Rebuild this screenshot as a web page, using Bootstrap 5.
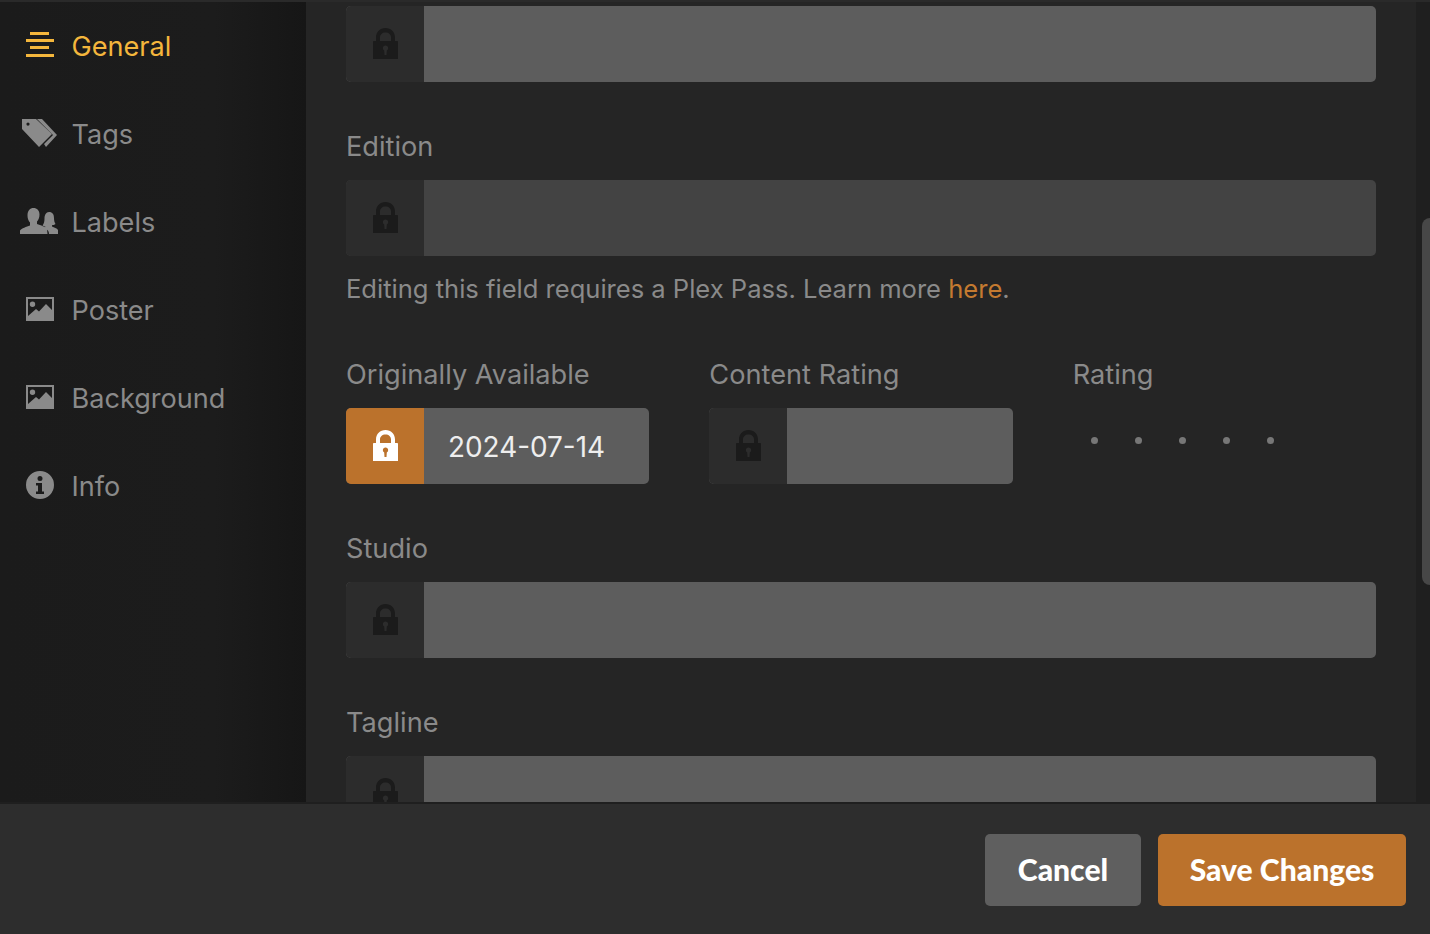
<!DOCTYPE html>
<html lang="en">
<head>
  <meta charset="UTF-8">
  <title>Edit Metadata</title>
  <meta name="viewport" content="width=device-width, initial-scale=1">
  <link href="https://cdn.jsdelivr.net/npm/bootstrap@5.3.3/dist/css/bootstrap.min.css" rel="stylesheet">
  <style>
    html, body { height: 100%; background: #2d2d2d; overflow: hidden; }
    body { font-family: Inter, "Noto Sans", sans-serif; }
    .app-shell { height: 934px; }
    .top-strip { height: 2px; background: #2a2a2a; flex: none; }
    .side-menu { width: 306px; flex: none; background: linear-gradient(90deg, #1b1b1b 0%, #1c1c1c 70%, #161616 100%); }
    .side-item { height: 88px; padding: 2px 0 0 20px; color: #8a8a8a; font-size: 27.1px; text-decoration: none; }
    .side-item.is-active { color: #f4b63c; }
    .side-icon { width: 52px; flex: none; fill: currentColor; margin-bottom: 5px; margin-left: -.5px; }
    .pane { background: #252525; padding: 4px 40px 0; min-width: 0; overflow: hidden; }
    .scroll-track { width: 14px; flex: none; background: #1f1f1f; padding-left: 6px; }
    .scroll-thumb { width: 8px; height: 367px; margin-top: 216px; background: #474747; border-radius: 8px 0 0 8px; }
    .field-label { color: #8a8a8a; font-size: 27.2px; line-height: 36px; margin: 0 0 15px; }
    .field-block { margin-bottom: 47px; }
    .lock-field { height: 76px; border-radius: 5px; overflow: hidden; background: #5d5d5d; }
    .lock-cell { width: 78px; flex: none; background: #2c2c2c; fill: #1b1b1b; }
    .lock-cell svg { margin-bottom: 2px; }
    .lock-cell.is-on { background: #bb722c; fill: #fff; }
    .lock-input { color: #eee; font-size: 27.9px; padding: 3px 0 0 24px; }
    .lock-field.is-disabled { background: #434343; }
    .help-line { color: #8a8a8a; font-size: 25.55px; line-height: 34px; margin-top: 16px; margin-bottom: 51px; }
    .help-line a { color: #c47a30; text-decoration: none; }
    .field-row { --bs-gutter-x: 60px; margin-bottom: 47px; }
    .rate-dots { height: 76px; padding: 29px 0 0 18px; gap: 37px; }
    .rate-dot { width: 7px; height: 7px; border-radius: 50%; background: #777; }
    .action-bar { height: 132px; flex: none; background: #2d2d2d; border-top: 2px solid #1f1f1f; padding: 30px 24px 0 0; gap: 17px; }
    .action-btn { height: 72px; border: 0; border-radius: 5px; color: #fff; font-family: Lato, sans-serif; font-weight: 900; font-size: 30.1px; padding-bottom: 6px; }
    .btn-cancel { width: 156px; background: #5f5f5f; }
    .btn-save { width: 248px; background: #bb722c; }
  </style>
</head>
<body>
  <svg width="0" height="0" class="d-block">
    <symbol id="lock-icon" viewBox="0 0 25 31">
      <path fill-rule="evenodd" d="M3 13V9.500C3 4 7 0 12.500 0S22 4 22 9.500V13h2c.6 0 1 .4 1 1v17H0V14c0-.6.4-1 1-1zM7 13h11V9.700C18 6.500 15.800 4.500 12.500 4.500S7 6.500 7 9.700zM12.500 17.500a2.600 2.600 0 0 0-1.300 4.900L11.500 27h2l.3-4.600a2.600 2.600 0 0 0-1.300-4.900z"/>
    </symbol>
    <symbol id="picture-icon" viewBox="0 0 28 24">
      <path fill-rule="evenodd" d="M0 0h28v24H0zM2 2v17l8-7 3 2.500L20 7l6 6V2zM6.500 4.500a2.700 2.700 0 1 1 0 5.400 2.700 2.700 0 0 1 0-5.400z"/>
    </symbol>
  </svg>

  <div class="app-shell d-flex flex-column">
    <div class="top-strip"></div>
    <div class="d-flex flex-grow-1 overflow-hidden">
      <nav class="side-menu d-flex flex-column">
        <a href="#" class="side-item is-active d-flex align-items-center">
          <svg class="side-icon" height="26" viewBox="-6 0 52 26"><path d="M4 0h19v3H4zM0 7h28v3H0zM4 14h19v3H4zM0 22h28v3H0z"/></svg>General
        </a>
        <a href="#" class="side-item d-flex align-items-center">
          <svg class="side-icon" height="28" viewBox="-2 0 52 28"><path fill-rule="evenodd" d="M0 0h14l16 15-13 13L0 10zM6 3.500a1.600 1.600 0 1 0 0 3.200 1.600 1.600 0 0 0 0-3.200z"/><path d="M15 0h5l15 16-11 12-2-3 9-9z"/></svg>Tags
        </a>
        <a href="#" class="side-item d-flex align-items-center">
          <svg class="side-icon" height="26" viewBox="0 0 52 26"><path d="M13.500 0c3.500 0 6 2.500 6 6.500 0 3-1 5.500-2.500 7v2.500c3.500 1.500 9 2.500 10 5l.5 5H0v-3.500c1.500-2.500 6.500-3.500 10-5v-3c-1.500-1.500-2.500-4-2.500-7C7.500 2.500 10 0 13.500 0z"/><path d="M29 4c3.500 0 5 2.500 5 6 0 2.500.5 4.500 1.500 6-1 .8-2.500 1.200-3.500 1.200v1.300c2 1 5 1.500 6 3.500v4h-9c0-3-1.500-4.500-4.500-6l1-1.300c-1 0-2-.5-3-1.200 1.500-2 2-4 2-7 0-3.500 1.500-6.500 4.500-6.500z"/></svg>Labels
        </a>
        <a href="#" class="side-item d-flex align-items-center">
          <svg class="side-icon" height="24" viewBox="-6 0 52 24"><use href="#picture-icon" width="28" height="24"/></svg>Poster
        </a>
        <a href="#" class="side-item d-flex align-items-center">
          <svg class="side-icon" height="24" viewBox="-6 0 52 24"><use href="#picture-icon" width="28" height="24"/></svg>Background
        </a>
        <a href="#" class="side-item d-flex align-items-center">
          <svg class="side-icon" height="28" viewBox="-6 0 52 28"><path fill-rule="evenodd" d="M14 0a14 14 0 1 1 0 28A14 14 0 0 1 14 0zM14 5a2.500 2.500 0 1 0 0 5 2.500 2.500 0 0 0 0-5zM10 12v2.500h2v6h-2V23h8v-2.500h-2V12z"/></svg>Info
        </a>
      </nav>

      <main class="pane flex-grow-1">
        <div class="field-block">
          <div class="lock-field d-flex">
            <div class="lock-cell d-flex align-items-center justify-content-center"><svg width="25" height="31"><use href="#lock-icon"/></svg></div>
          </div>
        </div>

        <p class="field-label">Edition</p>
        <div class="lock-field is-disabled d-flex">
          <div class="lock-cell d-flex align-items-center justify-content-center"><svg width="25" height="31"><use href="#lock-icon"/></svg></div>
        </div>
        <p class="help-line">Editing this field requires a Plex Pass. Learn more <a href="#">here</a>.</p>

        <div class="row field-row">
          <div class="col-4">
            <p class="field-label">Originally Available</p>
            <div class="lock-field d-flex">
              <div class="lock-cell is-on d-flex align-items-center justify-content-center"><svg width="25" height="31"><use href="#lock-icon"/></svg></div>
              <div class="lock-input d-flex align-items-center">2024-07-14</div>
            </div>
          </div>
          <div class="col-4">
            <p class="field-label">Content Rating</p>
            <div class="lock-field d-flex">
              <div class="lock-cell d-flex align-items-center justify-content-center"><svg width="25" height="31"><use href="#lock-icon"/></svg></div>
            </div>
          </div>
          <div class="col-4">
            <p class="field-label">Rating</p>
            <div class="rate-dots d-flex">
              <span class="rate-dot"></span><span class="rate-dot"></span><span class="rate-dot"></span><span class="rate-dot"></span><span class="rate-dot"></span>
            </div>
          </div>
        </div>

        <div class="field-block">
          <p class="field-label">Studio</p>
          <div class="lock-field d-flex">
            <div class="lock-cell d-flex align-items-center justify-content-center"><svg width="25" height="31"><use href="#lock-icon"/></svg></div>
          </div>
        </div>

        <div class="field-block">
          <p class="field-label">Tagline</p>
          <div class="lock-field d-flex">
            <div class="lock-cell d-flex align-items-center justify-content-center"><svg width="25" height="31"><use href="#lock-icon"/></svg></div>
          </div>
        </div>
      </main>

      <div class="scroll-track"><div class="scroll-thumb"></div></div>
    </div>

    <div class="action-bar d-flex justify-content-end align-items-start">
      <button type="button" class="btn action-btn btn-cancel">Cancel</button>
      <button type="button" class="btn action-btn btn-save">Save Changes</button>
    </div>
  </div>
  <script src="https://cdn.jsdelivr.net/npm/bootstrap@5.3.3/dist/js/bootstrap.bundle.min.js"></script>
</body>
</html>
